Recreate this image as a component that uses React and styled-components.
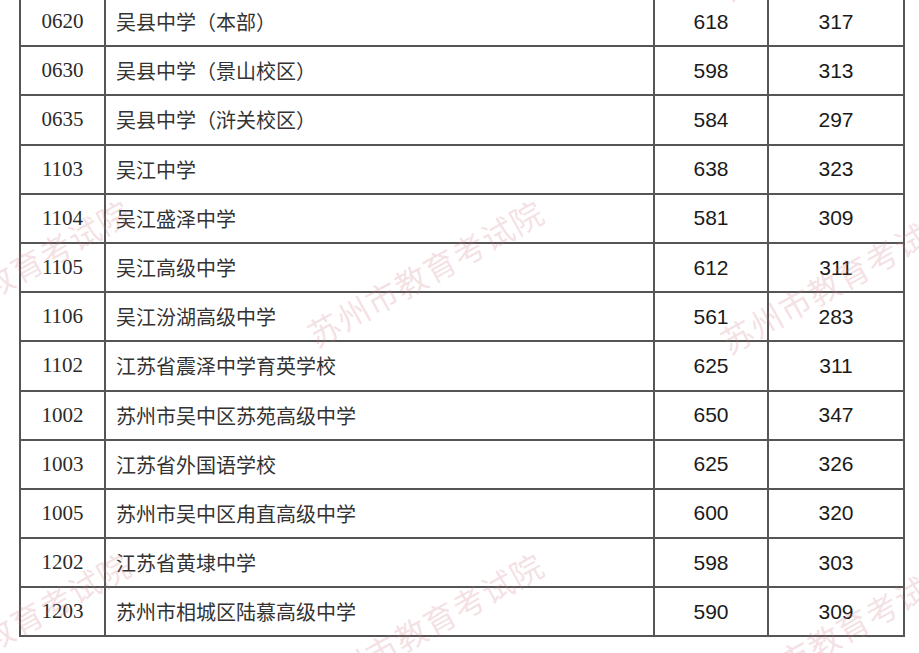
import React from "react";
import styled, { createGlobalStyle } from "styled-components";

const rows = [
  ["0620", "吴县中学（本部）", 618, 317],
  ["0630", "吴县中学（景山校区）", 598, 313],
  ["0635", "吴县中学（浒关校区）", 584, 297],
  ["1103", "吴江中学", 638, 323],
  ["1104", "吴江盛泽中学", 581, 309],
  ["1105", "吴江高级中学", 612, 311],
  ["1106", "吴江汾湖高级中学", 561, 283],
  ["1102", "江苏省震泽中学育英学校", 625, 311],
  ["1002", "苏州市吴中区苏苑高级中学", 650, 347],
  ["1003", "江苏省外国语学校", 625, 326],
  ["1005", "苏州市吴中区甪直高级中学", 600, 320],
  ["1202", "江苏省黄埭中学", 598, 303],
  ["1203", "苏州市相城区陆慕高级中学", 590, 309],
];

const colWidths = [85, 549, 114, 136];

// centres of the repeated watermark stamps
const marks = [
  [425, -81],
  [838, -74],
  [12, 272],
  [425, 272],
  [838, 279],
  [12, 625],
  [425, 625],
  [838, 632],
];

const GlobalStyle = createGlobalStyle`
  html, body {
    margin: 0;
    padding: 0;
    background: #fff;
    height: 653px;
    overflow: hidden;
  }
`;

const Page = styled.div`
  position: relative;
  width: 919px;
  height: 653px;
  overflow: hidden;
  background: #fff;
`;

const Sheet = styled.div`
  padding-left: 19px;
  margin-top: -4px;
`;

const Table = styled.table`
  border-collapse: collapse;
  table-layout: fixed;
  width: 884px;
`;

const Col = styled.col`
  width: ${(p) => p.$w}px;
`;

const Row = styled.tr`
  height: 49.2px;
`;

const Cell = styled.td`
  border: 2px solid #555;
  padding: 0;
  vertical-align: middle;
  white-space: nowrap;
  overflow: hidden;
`;

const CodeCell = styled(Cell)`
  text-align: center;
  font-family: "Liberation Serif", "Times New Roman", serif;
  font-size: 21px;
  color: #2a2a2a;
`;

const NameCell = styled(Cell)`
  padding-left: 10px;
  text-align: left;
  font-family: "Liberation Serif", "Noto Sans CJK SC", serif;
  font-size: 20px;
  color: #333;
`;

const ScoreCell = styled(Cell)`
  text-align: center;
  font-family: "Liberation Sans", Arial, sans-serif;
  font-size: 21px;
  color: #1a1a1a;
`;

const Stamp = styled.div`
  position: absolute;
  left: ${(p) => p.$x}px;
  top: ${(p) => p.$y}px;
  transform: translate(-50%, -50%) rotate(-29deg);
  font-family: "Noto Sans CJK SC", sans-serif;
  font-size: 32px;
  line-height: 1;
  letter-spacing: 1px;
  white-space: nowrap;
  color: rgba(205, 120, 135, 0.22);
  pointer-events: none;
`;

export default function App() {
  return (
    <Page>
      <GlobalStyle />
      <Sheet>
        <Table>
          <colgroup>
            {colWidths.map((w, i) => (
              <Col key={i} $w={w} />
            ))}
          </colgroup>
          <tbody>
            {rows.map(([code, name, a, b]) => (
              <Row key={code}>
                <CodeCell>{code}</CodeCell>
                <NameCell>{name}</NameCell>
                <ScoreCell>{a}</ScoreCell>
                <ScoreCell>{b}</ScoreCell>
              </Row>
            ))}
          </tbody>
        </Table>
      </Sheet>
      {marks.map(([x, y]) => (
        <Stamp key={`${x}-${y}`} $x={x} $y={y}>
          苏州市教育考试院
        </Stamp>
      ))}
    </Page>
  );
}
